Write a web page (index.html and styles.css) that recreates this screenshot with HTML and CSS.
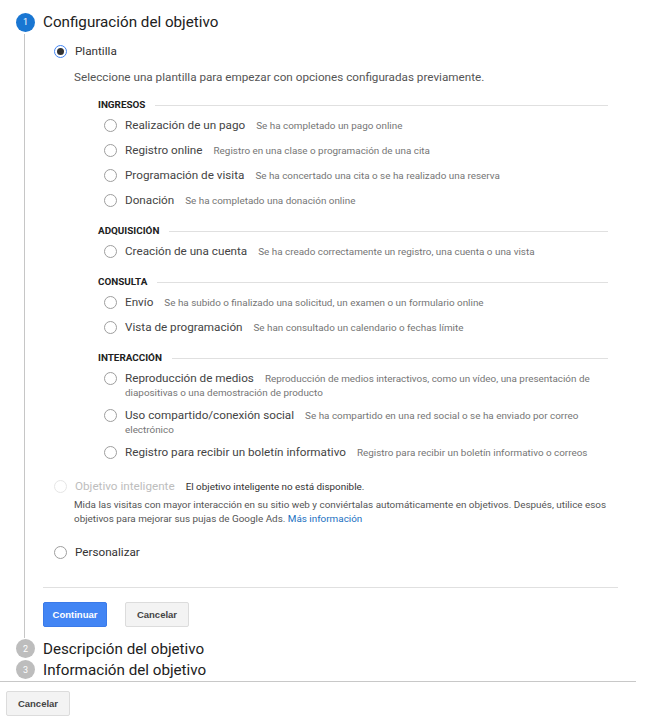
FILE: index.html
```html
<!DOCTYPE html>
<html lang="es">
<head>
<meta charset="utf-8">
<title>Configuración del objetivo</title>
<link rel="stylesheet" href="styles.css">
</head>
<body>
<div class="wizard">
  <div class="step">
    <div class="step-head">
      <span class="num num-active">1</span>
      <h2 class="step-title">Configuración del objetivo</h2>
    </div>
    <div class="step-body">
      <div class="opt">
        <span class="radio radio-checked"></span>
        <span class="opt-label">Plantilla</span>
      </div>
      <p class="intro">Seleccione una plantilla para empezar con opciones configuradas previamente.</p>

      <section class="group">
        <h3 class="group-title"><span>INGRESOS</span></h3>
        <div class="row"><span class="radio"></span><p class="row-text"><span class="row-label">Realización de un pago</span><span class="row-desc">Se ha completado un pago online</span></p></div>
        <div class="row"><span class="radio"></span><p class="row-text"><span class="row-label">Registro online</span><span class="row-desc">Registro en una clase o programación de una cita</span></p></div>
        <div class="row"><span class="radio"></span><p class="row-text"><span class="row-label">Programación de visita</span><span class="row-desc">Se ha concertado una cita o se ha realizado una reserva</span></p></div>
        <div class="row"><span class="radio"></span><p class="row-text"><span class="row-label">Donación</span><span class="row-desc">Se ha completado una donación online</span></p></div>
      </section>

      <section class="group">
        <h3 class="group-title"><span>ADQUISICIÓN</span></h3>
        <div class="row"><span class="radio"></span><p class="row-text"><span class="row-label">Creación de una cuenta</span><span class="row-desc">Se ha creado correctamente un registro, una cuenta o una vista</span></p></div>
      </section>

      <section class="group">
        <h3 class="group-title"><span>CONSULTA</span></h3>
        <div class="row"><span class="radio"></span><p class="row-text"><span class="row-label">Envío</span><span class="row-desc">Se ha subido o finalizado una solicitud, un examen o un formulario online</span></p></div>
        <div class="row"><span class="radio"></span><p class="row-text"><span class="row-label">Vista de programación</span><span class="row-desc">Se han consultado un calendario o fechas límite</span></p></div>
      </section>

      <section class="group">
        <h3 class="group-title"><span>INTERACCIÓN</span></h3>
        <div class="row row-wrap"><span class="radio"></span><p class="row-text"><span class="row-label">Reproducción de medios</span><span class="row-desc">Reproducción de medios interactivos, como un vídeo, una presentación de diapositivas o una demostración de producto</span></p></div>
        <div class="row row-wrap"><span class="radio"></span><p class="row-text"><span class="row-label">Uso compartido/conexión social</span><span class="row-desc">Se ha compartido en una red social o se ha enviado por correo electrónico</span></p></div>
        <div class="row"><span class="radio"></span><p class="row-text"><span class="row-label">Registro para recibir un boletín informativo</span><span class="row-desc">Registro para recibir un boletín informativo o correos</span></p></div>
      </section>

      <div class="opt opt-smart">
        <span class="radio radio-disabled"></span>
        <span class="opt-label opt-label-disabled">Objetivo inteligente</span>
        <span class="opt-note">El objetivo inteligente no está disponible.</span>
      </div>
      <p class="smart-desc">Mida las visitas con mayor interacción en su sitio web y conviértalas automáticamente en objetivos. Después, utilice esos objetivos para mejorar sus pujas de Google Ads. <a class="link" href="#">Más información</a></p>

      <div class="opt opt-custom">
        <span class="radio"></span>
        <span class="opt-label">Personalizar</span>
      </div>

      <hr class="divider">

      <div class="actions">
        <button class="btn btn-primary" type="button">Continuar</button>
        <button class="btn" type="button">Cancelar</button>
      </div>
    </div>
  </div>

  <div class="step-head step-head-small">
    <span class="num num-idle">2</span>
    <h2 class="step-title">Descripción del objetivo</h2>
  </div>
  <div class="step-head step-head-small">
    <span class="num num-idle">3</span>
    <h2 class="step-title">Información del objetivo</h2>
  </div>
</div>
<div class="footer">
  <button class="btn" type="button">Cancelar</button>
</div>
</body>
</html>
```

FILE: styles.css
```css
* { box-sizing: border-box; }

html, body {
  margin: 0;
  padding: 0;
  background: #fff;
}

body {
  font-family: Roboto, "Liberation Sans", Arial, sans-serif;
  color: #333;
}

.wizard {
  width: 636px;
  padding-top: 10px;
  border-bottom: 1px solid #c8c8c8;
  padding-bottom: 1px;
}

.step-head {
  display: flex;
  align-items: center;
  height: 24px;
  padding-left: 16px;
}

.step-head-small {
  height: 21px;
}

.num {
  width: 19px;
  height: 19px;
  border-radius: 50%;
  color: #fff;
  font-size: 9px;
  display: flex;
  align-items: center;
  justify-content: center;
  flex: none;
}

.num-active { background: #1976d2; }
.num-idle { background: #bdbdbd; }

.step-title {
  margin: 0 0 0 8px;
  font-size: 15.2px;
  font-weight: 400;
  color: #212121;
  line-height: 20px;
}

.step-body {
  margin-left: 24px;
  border-left: 1px solid #c6c6c6;
  padding: 9px 18px 11px 18px;
  width: 612px;
}

.opt {
  display: flex;
  align-items: center;
  height: 17px;
  padding-left: 11px;
}

.radio {
  width: 13px;
  height: 13px;
  border: 1px solid #9e9e9e;
  border-radius: 50%;
  flex: none;
  display: flex;
  align-items: center;
  justify-content: center;
  background: #fff;
}

.radio-checked {
  border-color: #4285f4;
}

.radio-checked::after {
  content: "";
  width: 7px;
  height: 7px;
  border-radius: 50%;
  background: #333;
}

.radio-disabled {
  border-color: #e6e6e6;
}

.opt-label {
  margin-left: 8px;
  font-size: 11.7px;
  color: #333;
  line-height: 17px;
}

.opt-label-disabled {
  color: #bdbdbd;
}

.opt-note {
  margin-left: 11px;
  font-size: 9.9px;
  color: #333;
}

.intro {
  margin: 9px 0 0 31px;
  font-size: 11.7px;
  line-height: 17px;
  color: #555;
}

.group {
  margin: 12px 10px 0 55px;
}

.group-title {
  margin: 0;
  display: flex;
  align-items: center;
  font-size: 9.9px;
  font-weight: 700;
  line-height: 14px;
  color: #212121;
}

.group-title::after {
  content: "";
  flex: 1;
  height: 1px;
  background: #e0e0e0;
  margin-left: 10px;
}

.row {
  display: flex;
  align-items: flex-start;
  padding: 5.5px 0 5.5px 6px;
}

.row-wrap {
  padding-bottom: 3.5px;
}

.row .radio {
  margin-top: 1px;
}

.row-text {
  margin: 0 0 0 8px;
  line-height: 14px;
  font-size: 11.7px;
}

.row-label {
  color: #444;
}

.row-desc {
  margin-left: 11px;
  font-size: 9.9px;
  line-height: 10px;
  color: #757575;
}

.opt-smart {
  margin-top: 14px;
}

.smart-desc {
  margin: 3px 10px 0 31px;
  font-size: 9.9px;
  line-height: 14px;
  color: #555;
}

.link {
  color: #1a6fbf;
  text-decoration: none;
}

.opt-custom {
  margin-top: 18px;
}

.divider {
  margin: 26px 0 0 0;
  border: 0;
  border-top: 1px solid #e0e0e0;
}

.actions {
  display: flex;
  gap: 18px;
  margin-top: 14px;
}

.btn {
  height: 25px;
  width: 64px;
  padding: 0;
  font-family: "Liberation Sans", Arial, sans-serif;
  font-size: 9.5px;
  font-weight: 700;
  color: #444;
  background: #f3f3f3;
  border: 1px solid #dcdcdc;
  border-radius: 2px;
}

.btn-primary {
  color: #fff;
  background: #4285f4;
  border-color: #3b7ae8;
}

.footer {
  padding: 9px 0 0 6px;
}
```
